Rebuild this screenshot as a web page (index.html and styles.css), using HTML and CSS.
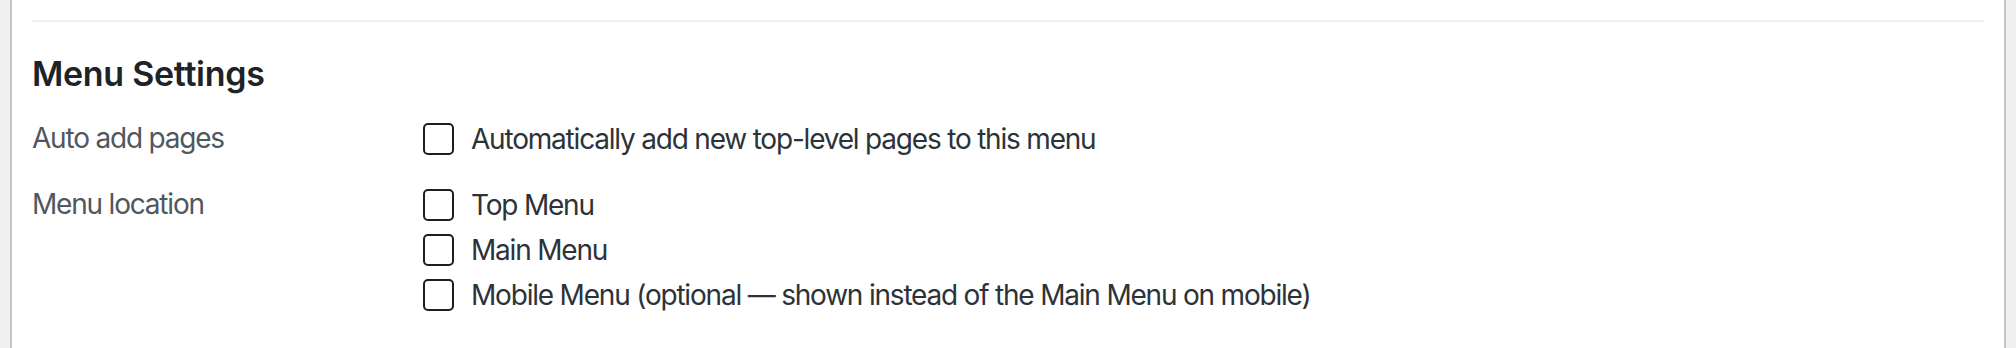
FILE: index.html
```html
<!DOCTYPE html>
<html lang="en">
<head>
    <meta charset="UTF-8">
    <title>Menu Settings</title>
    <link rel="stylesheet" href="styles.css">
</head>
<body>

    <div class="menu-panel">
        <div class="menu-settings">
            <h2>Menu Settings</h2>

            <div class="setting-row">
                <div class="setting-label">Auto add pages</div>
                <div class="setting-options">
                    <label class="option">
                        <input type="checkbox"> <span>Automatically add new top-level pages to this menu</span>
                    </label>
                </div>
            </div>

            <div class="setting-row">
                <div class="setting-label">Menu location</div>
                <div class="setting-options">
                    <label class="option">
                        <input type="checkbox"> <span>Top Menu</span>
                    </label>
                    <label class="option">
                        <input type="checkbox"> <span>Main Menu</span>
                    </label>
                    <label class="option">
                        <input type="checkbox"> <span>Mobile Menu (optional — shown instead of the Main Menu on mobile)</span>
                    </label>
                </div>
            </div>
        </div>
    </div>

</body>
</html>
```

FILE: styles.css
```css
body {
    font-family: 'Inter', 'Liberation Sans', sans-serif;
    background-color: #f0f0f1;
    margin: 0;
    padding: 0;
    height: 348px;
    overflow: hidden;
}

.menu-panel {
    margin-left: 10px;
    width: 1996px;
    height: 348px;
    padding: 0 20px;
    box-sizing: border-box;
    background-color: #fff;
    border-left: 2px solid #c3c4c7;
    border-right: 2px solid #c3c4c7;
}

.menu-settings {
    position: relative;
    top: 20px;
    border-top: 2px solid #f0f0f1;
}

.menu-settings h2 {
    margin: 32px 0 22px;
    font-size: 34px;
    line-height: 40px;
    font-weight: 600;
    color: #1d2327;
    letter-spacing: -0.3px;
}

/* label column + options column, like the wp form table */
.setting-row {
    display: grid;
    grid-template-columns: 391px 1fr;
    margin-bottom: 21px;
}

.setting-label {
    font-size: 28px;
    line-height: 45px;
    letter-spacing: -1.2px;
    color: #50575e;
}

.setting-options {
    display: flex;
    flex-direction: column;
}

.option {
    display: flex;
    align-items: center;
    height: 45px;
    font-size: 28px;
    letter-spacing: -1.2px;
    color: #2c3338;
}

.option input {
    appearance: none;
    -webkit-appearance: none;
    flex-shrink: 0;
    width: 31px;
    height: 32px;
    margin: 0 17px 0 0;
    border: 2px solid #1e1e1e;
    border-radius: 5px;
    background-color: #fff;
    box-sizing: border-box;
}
```
